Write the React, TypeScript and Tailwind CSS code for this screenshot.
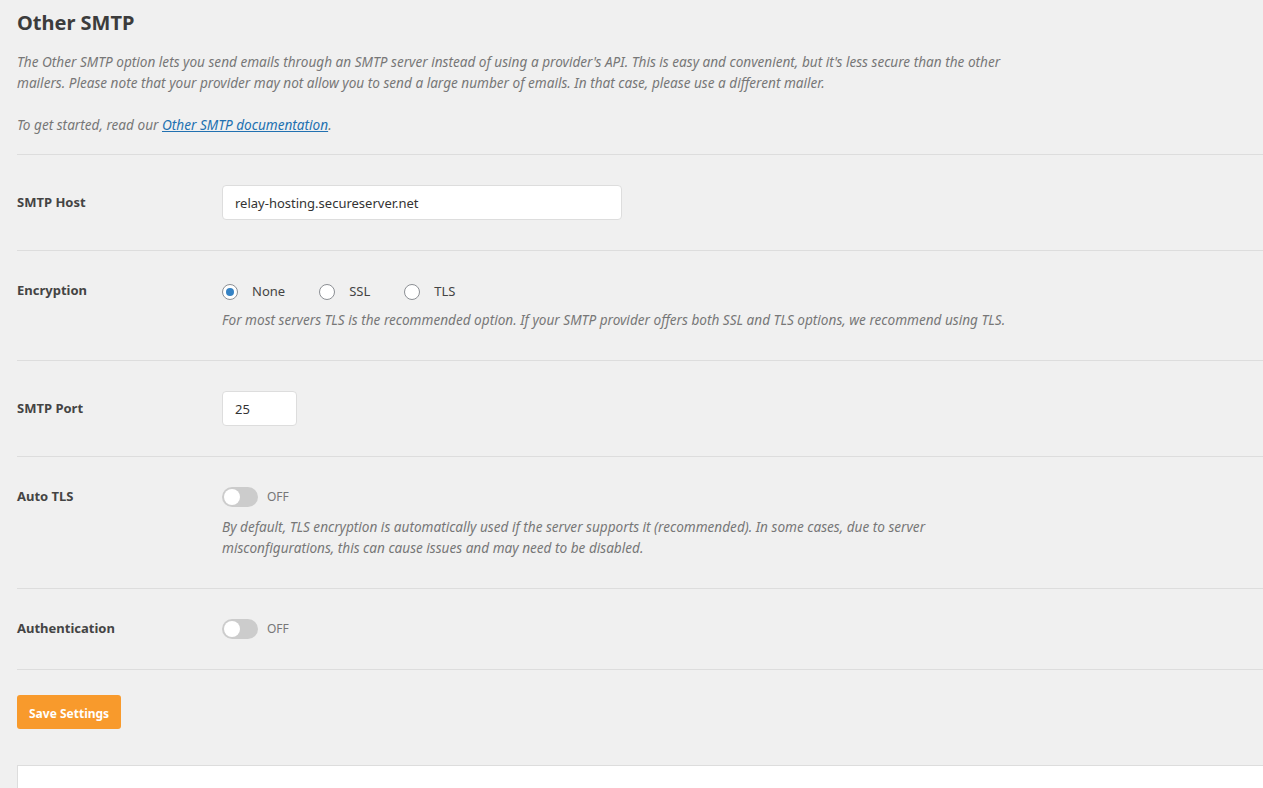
import React from 'react';

const font = { fontFamily: '"Noto Sans", "Open Sans", sans-serif' };

function Toggle() {
    return (
        <div className="flex items-center gap-[9px] h-[20px]">
            <span className="relative w-[36px] h-[20px] rounded-full bg-[#cccccc]">
                <span className="absolute left-[2px] top-[2px] w-[16px] h-[16px] rounded-full bg-white" />
            </span>
            <span className="text-[12px] text-[#777777]">OFF</span>
        </div>
    );
}

function Radio({ label, checked }: { label: string; checked?: boolean }) {
    return (
        <label className="flex items-center gap-[14px] mr-[34px]">
            <span className="w-[16px] h-[16px] rounded-full border border-[#8c8f94] bg-white flex items-center justify-center">
                {checked && <span className="w-[8px] h-[8px] rounded-full bg-[#3582c4]" />}
            </span>
            <span className="text-[13px] text-[#444444]">{label}</span>
        </label>
    );
}

function Row({ label, children, labelTop }: { label: string; children: React.ReactNode; labelTop: string }) {
    return (
        <div className="flex border-b border-[#dddddd] py-[30px]">
            <div className={`w-[205px] shrink-0 text-[13px] font-bold text-[#444444] ${labelTop}`}>{label}</div>
            <div className="flex-1">{children}</div>
        </div>
    );
}

export default function App() {
    return (
        <div className="min-h-screen bg-[#f0f0f0] pl-[17px] overflow-hidden" style={font}>
            {/* Header */}
            <div className="border-b border-[#dddddd] pt-[10px] pb-[19px] mr-[-20px]">
                <h2 className="text-[20px] font-bold text-[#3c3c3c] leading-[26px]">Other SMTP</h2>
                <p className="mt-[15px] text-[13.6px] italic text-[#777777] leading-[21px] whitespace-nowrap">
                    The Other SMTP option lets you send emails through an SMTP server instead of using a provider's API. This is easy and convenient, but it's less secure than the other
                    <br />
                    mailers. Please note that your provider may not allow you to send a large number of emails. In that case, please use a different mailer.
                </p>
                <p className="mt-[21px] text-[13.6px] italic text-[#777777] leading-[21px]">
                    To get started, read our{' '}
                    <a href="#" className="text-[#2271b1] underline">Other SMTP documentation</a>.
                </p>
            </div>

            <Row label="SMTP Host" labelTop="pt-[8px]">
                <input
                    readOnly
                    value="relay-hosting.secureserver.net"
                    className="w-[400px] h-[35px] px-[12px] bg-white border border-[#dddddd] rounded-[4px] text-[13px] text-[#333333] outline-none"
                />
            </Row>

            <Row label="Encryption" labelTop="pt-0">
                <div className="flex items-center h-[22px]">
                    <Radio label="None" checked />
                    <Radio label="SSL" />
                    <Radio label="TLS" />
                </div>
                <p className="mt-[6px] text-[13.6px] italic text-[#777777] leading-[21px]">
                    For most servers TLS is the recommended option. If your SMTP provider offers both SSL and TLS options, we recommend using TLS.
                </p>
            </Row>

            <Row label="SMTP Port" labelTop="pt-[8px]">
                <input
                    readOnly
                    value="25"
                    className="w-[75px] h-[35px] px-[12px] bg-white border border-[#dddddd] rounded-[4px] text-[13px] text-[#333333] outline-none"
                />
            </Row>

            <Row label="Auto TLS" labelTop="pt-0">
                <Toggle />
                <p className="mt-[9px] text-[13.6px] italic text-[#777777] leading-[21px] whitespace-nowrap">
                    By default, TLS encryption is automatically used if the server supports it (recommended). In some cases, due to server
                    <br />
                    misconfigurations, this can cause issues and may need to be disabled.
                </p>
            </Row>

            <Row label="Authentication" labelTop="pt-0">
                <Toggle />
            </Row>

            <div className="pt-[25px]">
                <button className="h-[34px] px-[12px] pt-[3px] rounded-[3px] bg-[#f89a2c] text-white text-[12px] font-bold">
                    Save Settings
                </button>
            </div>

            <div className="mt-[36px] h-[40px] bg-white border border-[#dddddd] mr-[-4px]" />
        </div>
    );
}
